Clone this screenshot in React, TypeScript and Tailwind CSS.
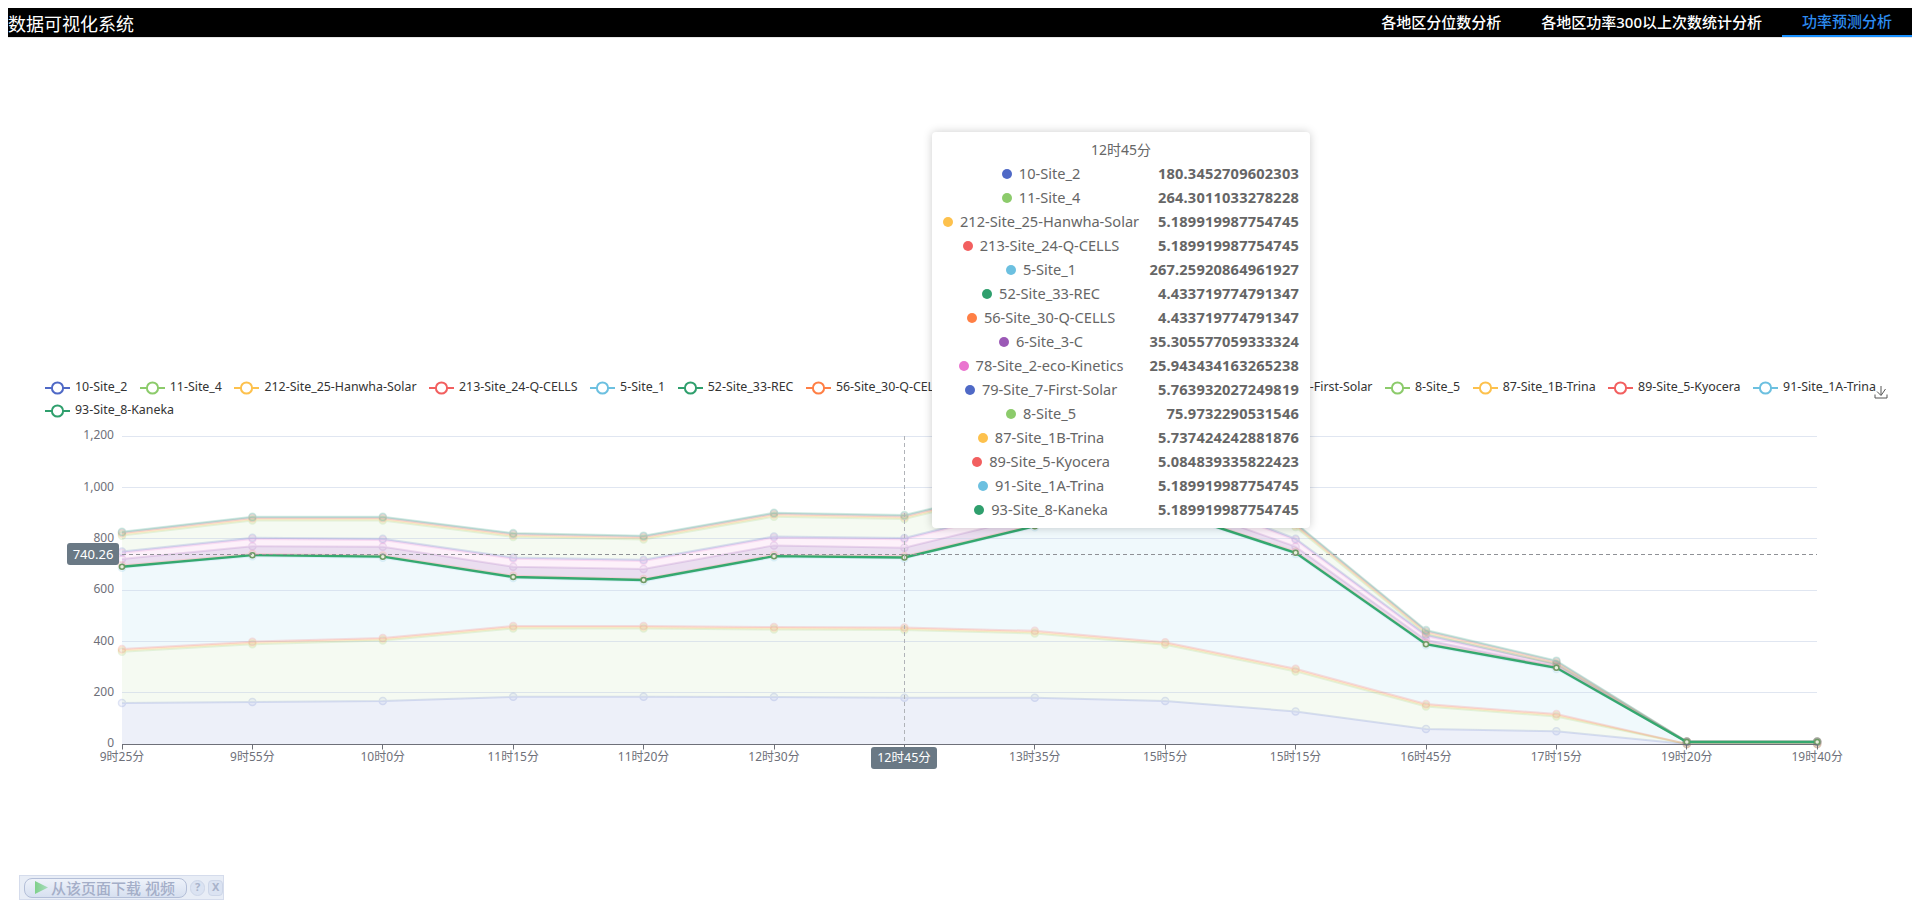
const fontFamily = "[font-family:'Noto_Sans','Noto_Sans_CJK_SC',sans-serif]";

const xLabels = ['9时25分','9时55分','10时0分','11时15分','11时20分','12时30分','12时45分','13时35分','15时5分','15时15分','16时45分','17时15分','19时20分','19时40分'];
const X = (i: number) => 122 + i * 130.4;
const Y = (v: number) => 744.3 - v * 0.25667;
const GridY = (v: number) => Math.floor(Y(v)) + 0.5;

const c10 = [161,165,169,185,185,184,181,181,169,128,60,51,1,1];
const c11 = [361,390,404,451,451,447,445,432,388,284,147,108,1,1];
const G = [692,737,731,652,640,733,728,850,912,746,390,298,9,9];
const c6 = [722,772,770,692,683,775,766,890,950,770,406,303,9.6,9.6];
const c78 = [746,800,796,723,714,805,799,925,990,796,422,308,10,10];
const c8 = [813,872,872,808,798,887,878,1001,1060,847,430,311,10.4,10.4];
const T = [828,887,887,823,813,902,893,1016,1075,862,445,326,11,11];

const step = (a: number[], d: number) => a.map((v, i) => v + (i >= 12 ? d * 0.05 : d));
const lerp = (a: number[], b: number[], t: number) => a.map((v, i) => v + (b[i] - v) * t);

const series = [
  { name: '10-Site_2', value: '180.3452709602303', color: '#4f69c6', top: c10, fade: 0.1 },
  { name: '11-Site_4', value: '264.3011033278228', color: '#8ccb6b', top: c11, fade: 0.09 },
  { name: '212-Site_25-Hanwha-Solar', value: '5.189919987754745', color: '#fdc14d', top: step(c11, 5), fade: 0.1 },
  { name: '213-Site_24-Q-CELLS', value: '5.189919987754745', color: '#f25f5f', top: step(c11, 10), fade: 0.1 },
  { name: '5-Site_1', value: '267.25920864961927', color: '#6cc0e0', top: step(G, -4.4), fade: 0.1 },
  { name: '52-Site_33-REC', value: '4.433719774791347', color: '#2f9f6d', top: G, fade: 0.1 },
  { name: '56-Site_30-Q-CELLS', value: '4.433719774791347', color: '#ff7f45', top: step(G, 4.4), fade: 0.1 },
  { name: '6-Site_3-C', value: '35.305577059333324', color: '#9b59b6', top: c6, fade: 0.2 },
  { name: '78-Site_2-eco-Kinetics', value: '25.943434163265238', color: '#ea74cf', top: c78, fade: 0.1 },
  { name: '79-Site_7-First-Solar', value: '5.763932027249819', color: '#4f69c6', top: step(c78, 5), fade: 0.1 },
  { name: '8-Site_5', value: '75.9732290531546', color: '#8ccb6b', top: c8, fade: 0.09 },
  { name: '87-Site_1B-Trina', value: '5.737424242881876', color: '#fdc14d', top: lerp(c8, T, 0.33), fade: 0.1 },
  { name: '89-Site_5-Kyocera', value: '5.084839335822423', color: '#f25f5f', top: lerp(c8, T, 0.66), fade: 0.1 },
  { name: '91-Site_1A-Trina', value: '5.189919987754745', color: '#6cc0e0', top: lerp(c8, T, 0.85), fade: 0.1 },
  { name: '93-Site_8-Kaneka', value: '5.189919987754745', color: '#2f9f6d', top: T, fade: 0.1 },
];

const line = (a: number[]) => a.map((v, i) => `${X(i)},${Y(v)}`).join(' ');
const area = (top: number[], bottom: number[] | null) => {
  const low = bottom ?? top.map(() => 0);
  const back = low.map((v, i) => `${X(i)},${Y(v)}`).reverse().join(' ');
  return `${line(top)} ${back}`;
};

function LegendItem({ name, color }: { name: string; color: string }) {
  return (
    <div className="flex h-[23px] items-center gap-[5px]">
      <svg width="25" height="14" viewBox="0 0 25 14">
        <line x1="0" y1="7" x2="25" y2="7" stroke={color} strokeWidth="2" />
        <circle cx="12.5" cy="7" r="5.6" fill="#fff" stroke={color} strokeWidth="2" />
      </svg>
      <span className="whitespace-nowrap text-[12.4px] text-[#333]">{name}</span>
    </div>
  );
}

function Chart() {
  return (
    <svg width="1904" height="358" viewBox="8 422 1904 358" className="block">
      {[0, 200, 400, 600, 800, 1000, 1200].map((v) => (
        <g key={v}>
          {v !== 0 && <line x1="122" x2="1817" y1={GridY(v)} y2={GridY(v)} stroke="#e0e6f1" strokeWidth="1" />}
          <text x="114" y={Y(v) + 3} textAnchor="end" fontSize="12" fill="#6e7079">
            {v === 0 ? '0' : v.toLocaleString('en-US')}
          </text>
        </g>
      ))}
      {series.map((s, i) => (
        <polygon key={s.name} points={area(s.top, i === 0 ? null : series[i - 1].top)} fill={s.color} fillOpacity={s.fade} />
      ))}
      {[200, 400, 600, 800, 1000, 1200].map((v) => (
        <line key={v} x1="122" x2="1817" y1={GridY(v)} y2={GridY(v)} stroke="#e0e6f1" strokeOpacity="0.5" strokeWidth="1" />
      ))}
      {series.map((s) =>
        s.name === '52-Site_33-REC' ? null : (
          <g key={s.name} opacity="0.18">
            <polyline points={line(s.top)} fill="none" stroke={s.color} strokeWidth="2" />
            {s.top.map((v, i) => (
              <circle key={i} cx={X(i)} cy={Y(v)} r="3.5" fill={s.color} fillOpacity="0.35" stroke={s.color} strokeWidth="1.5" />
            ))}
          </g>
        ),
      )}
      <polyline points={line(G)} fill="none" stroke="#35a86f" strokeWidth="2.4" />
      {G.map((v, i) => (
        <circle key={i} cx={X(i)} cy={Y(v)} r="2.5" fill="#e8eedd" stroke="#6f9a66" strokeWidth="1.5" />
      ))}
      <line x1="122" x2="1817" y1="744.5" y2="744.5" stroke="#6e7079" strokeWidth="1" />
      {xLabels.map((l, i) => (
        <g key={l}>
          <line x1={Math.floor(X(i)) + 0.5} x2={Math.floor(X(i)) + 0.5} y1="744.5" y2="749.5" stroke="#6e7079" strokeWidth="1" />
          {i !== 6 && (
            <text x={X(i)} y="761" textAnchor="middle" fontSize="12" fill="#6e7079">{l}</text>
          )}
        </g>
      ))}
      <line x1="904.5" x2="904.5" y1="436" y2="744" stroke="#b0b3b8" strokeWidth="1" strokeDasharray="4 3" />
      <line x1="122" x2="1817" y1="554.5" y2="554.5" stroke="#8f9196" strokeWidth="1" strokeDasharray="4 3" />
      <rect x="67" y="543" width="52" height="22" rx="3" fill="#6a7985" />
      <text x="93" y="558.5" textAnchor="middle" fontSize="13" fill="#fff">740.26</text>
      <rect x="871" y="747" width="66" height="22" rx="3" fill="#6a7985" />
      <text x="904" y="762" textAnchor="middle" fontSize="12.5" fill="#fff">12时45分</text>
    </svg>
  );
}

function Tooltip() {
  return (
    <div className="absolute left-[932px] top-[132px] h-[396px] w-[378px] rounded-[4px] bg-white px-[11px] pt-[6px] text-[14.6px] text-[#666] shadow-[0_0_10px_rgba(0,0,0,0.2)]">
      <div className="h-[24px] text-center text-[14px] leading-[24px]">12时45分</div>
      <table className="w-full border-collapse">
        <tbody>
          {series.map((s) => (
            <tr key={s.name} className="h-[24px]">
              <td className="w-[195px] whitespace-nowrap p-0 text-center">
                <span className="mr-[7px] inline-block h-[10px] w-[10px] rounded-full" style={{ backgroundColor: s.color }} />
                {s.name}
              </td>
              <td className="whitespace-nowrap p-0 text-right font-bold tracking-[0.2px]">{s.value}</td>
            </tr>
          ))}
        </tbody>
      </table>
    </div>
  );
}

function DownloadBar() {
  return (
    <div className="absolute left-[19px] top-[875px] flex h-[25px] w-[205px] items-center gap-[3px] border border-[#d5dcec] bg-[#e8edf6] pl-[4px]">
      <div className="flex h-[20px] w-[165px] items-center gap-[2px] rounded-[8px] border border-[#b4bfd8] bg-gradient-to-b from-[#eef2fa] to-[#d7e0f0] pl-[9px]">
        <svg width="15" height="15" viewBox="0 0 15 15">
          <defs>
            <linearGradient id="playFill" x1="0" x2="1" y1="0" y2="0">
              <stop offset="0" stopColor="#7fd08a" />
              <stop offset="1" stopColor="#a9dcc0" />
            </linearGradient>
          </defs>
          <polygon points="1,1 14,7.5 1,14" fill="url(#playFill)" />
        </svg>
        <span className="whitespace-nowrap text-[15px] font-medium leading-[18px] text-[#a4aec8]">从该页面下载 视频</span>
      </div>
      <div className="flex h-[16px] w-[15px] items-center justify-center rounded-full border border-[#cdd6e8] bg-[#dbe3f2] text-[11px] font-bold text-[#a9b3cb]">?</div>
      <div className="flex h-[16px] w-[15px] items-center justify-center rounded-[4px] border border-[#cdd6e8] bg-[#dbe3f2] text-[11px] font-bold text-[#a9b3cb]">X</div>
    </div>
  );
}

export default function App() {
  return (
    <div className={`relative h-[919px] w-full overflow-hidden bg-white p-2 ${fontFamily}`}>
      <header className="flex h-[30px] items-center justify-between border-b border-[#e6e6e6] bg-black text-white">
        <div className="pt-[3px] text-[18px] leading-[28px]">数据可视化系统</div>
        <nav className="flex h-full text-[15px] font-medium">
          <div className="flex h-full items-center px-5">各地区分位数分析</div>
          <div className="flex h-full items-center px-5">各地区功率300以上次数统计分析</div>
          <div className="flex h-full items-center border-b-2 border-[#1890ff] px-5 text-[#2d8cf0]">功率预测分析</div>
        </nav>
      </header>
      <section className="mt-[338px]">
        <div className="relative flex w-[1890px] flex-wrap gap-x-[12.5px] pl-[37px]">
          {series.map((s) => (
            <LegendItem key={s.name} name={s.name} color={s.color} />
          ))}
          <svg className="absolute left-[1866px] top-[9px]" width="14" height="14" viewBox="0 0 14 14" fill="none" stroke="#555" strokeWidth="1">
            <path d="M1 9.5V13H13V9.5" />
            <path d="M7 1V10M3 6.5L7 10.5L11.5 4" />
          </svg>
        </div>
        <Chart />
      </section>
      <Tooltip />
      <DownloadBar />
    </div>
  );
}
